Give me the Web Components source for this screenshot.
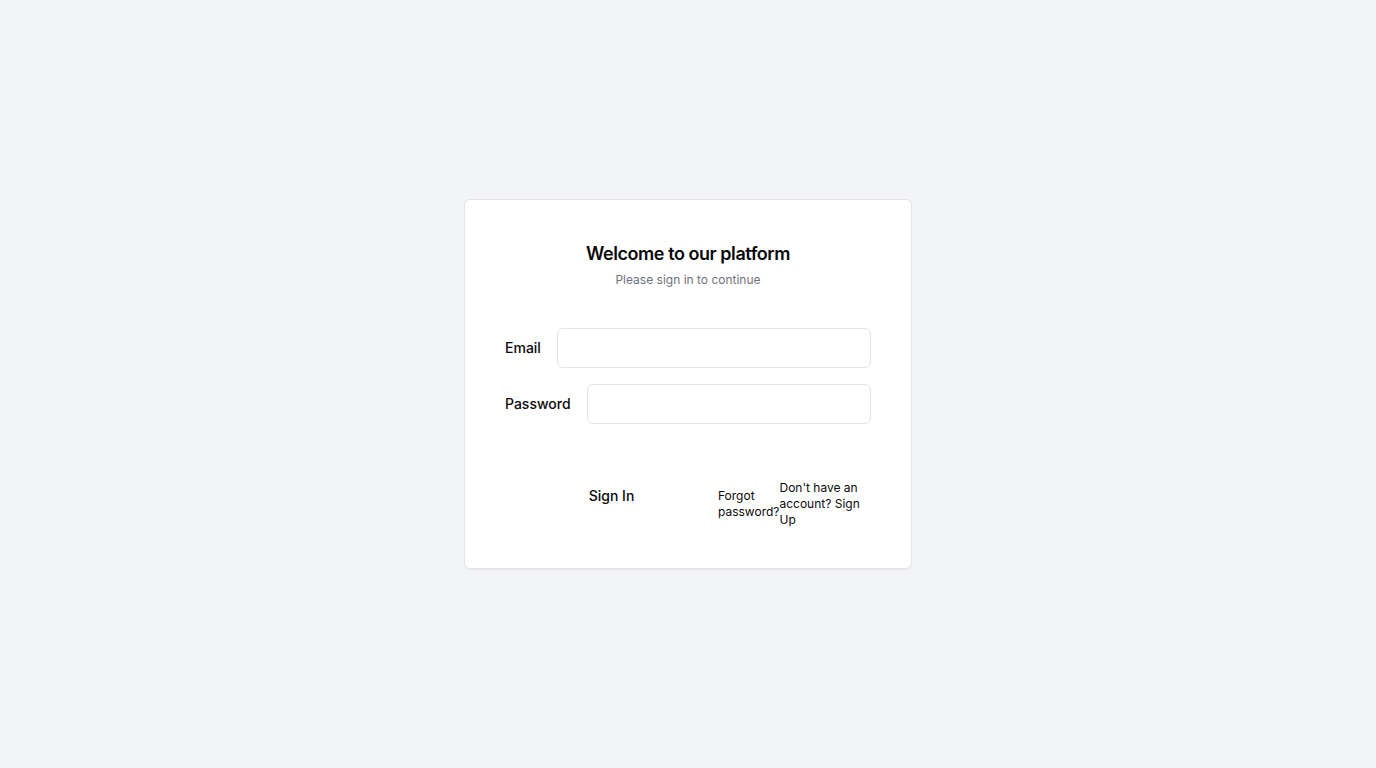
<!DOCTYPE html>
<html lang="en">
<head>
<meta charset="utf-8">
<meta name="viewport" content="width=device-width, initial-scale=1">
<title>Sign in</title>
<style>
  body { margin: 0; font-family: Inter, sans-serif; color: #09090b; background: #f3f4f6; }
</style>
</head>
<body>
<login-page></login-page>
<script>
const define = (name, html, setup) => {
  const template = document.createElement('template');
  template.innerHTML = html;
  customElements.define(name, class extends HTMLElement {
    constructor() {
      super();
      this.attachShadow({ mode: 'open' }).append(template.content.cloneNode(true));
    }
    connectedCallback() { if (setup) setup(this, this.shadowRoot); }
  });
};

define('form-field', `
  <style>
    :host { display: flex; align-items: center; gap: 16px; }
    label { font-size: 14px; line-height: 14px; font-weight: 500; }
    input {
      flex: 1; min-width: 0; height: 40px; box-sizing: border-box; padding: 8px 12px;
      border: 1px solid #e4e4e7; border-radius: 6px; background: #fff;
      font: 14px/20px Inter, sans-serif; color: inherit;
    }
  </style>
  <label for="control"><slot></slot></label>
  <input id="control">
`, (host, root) => { root.querySelector('input').type = host.getAttribute('type') || 'text'; });

define('login-card', `
  <style>
    :host {
      display: block; box-sizing: border-box; width: 100%; max-width: 448px; padding: 40px;
      background: #fff; border: 1px solid #e4e4e7; border-radius: 6px;
      box-shadow: 0 1px 2px rgba(0, 0, 0, .05);
    }
    header { text-align: center; margin-bottom: 40px; }
    h1 { margin: 0; font-size: 18px; line-height: 28px; font-weight: 600; letter-spacing: -0.025em; }
    p { margin: 4px 0 0; font-size: 12px; line-height: 16px; color: #71717a; }
    .fields { display: grid; gap: 16px; }
    footer { margin-top: 52px; }
  </style>
  <header>
    <h1><slot name="title"></slot></h1>
    <p><slot name="subtitle"></slot></p>
  </header>
  <div class="fields"><slot></slot></div>
  <footer><slot name="actions"></slot></footer>
`);

define('login-actions', `
  <style>
    :host { display: flex; align-items: flex-start; }
    button {
      flex: 1; height: 40px; padding: 0 16px; border: 0; background: none; color: inherit;
      font: 500 14px/20px Inter, sans-serif; cursor: pointer;
    }
    nav { display: flex; align-items: center; width: 153px; margin-top: 4px; }
    a { font-size: 12px; line-height: 16px; color: inherit; text-decoration: none; }
  </style>
  <button type="submit">Sign In</button>
  <nav><a href="#forgot">Forgot password?</a><a href="#signup">Don't have an account? Sign Up</a></nav>
`);

define('login-page', `
  <style>
    :host { display: flex; align-items: center; justify-content: center; min-height: 100vh; }
  </style>
  <login-card>
    <span slot="title">Welcome to our platform</span>
    <span slot="subtitle">Please sign in to continue</span>
    <form-field type="email">Email</form-field>
    <form-field type="password">Password</form-field>
    <login-actions slot="actions"></login-actions>
  </login-card>
`);
</script>
</body>
</html>
